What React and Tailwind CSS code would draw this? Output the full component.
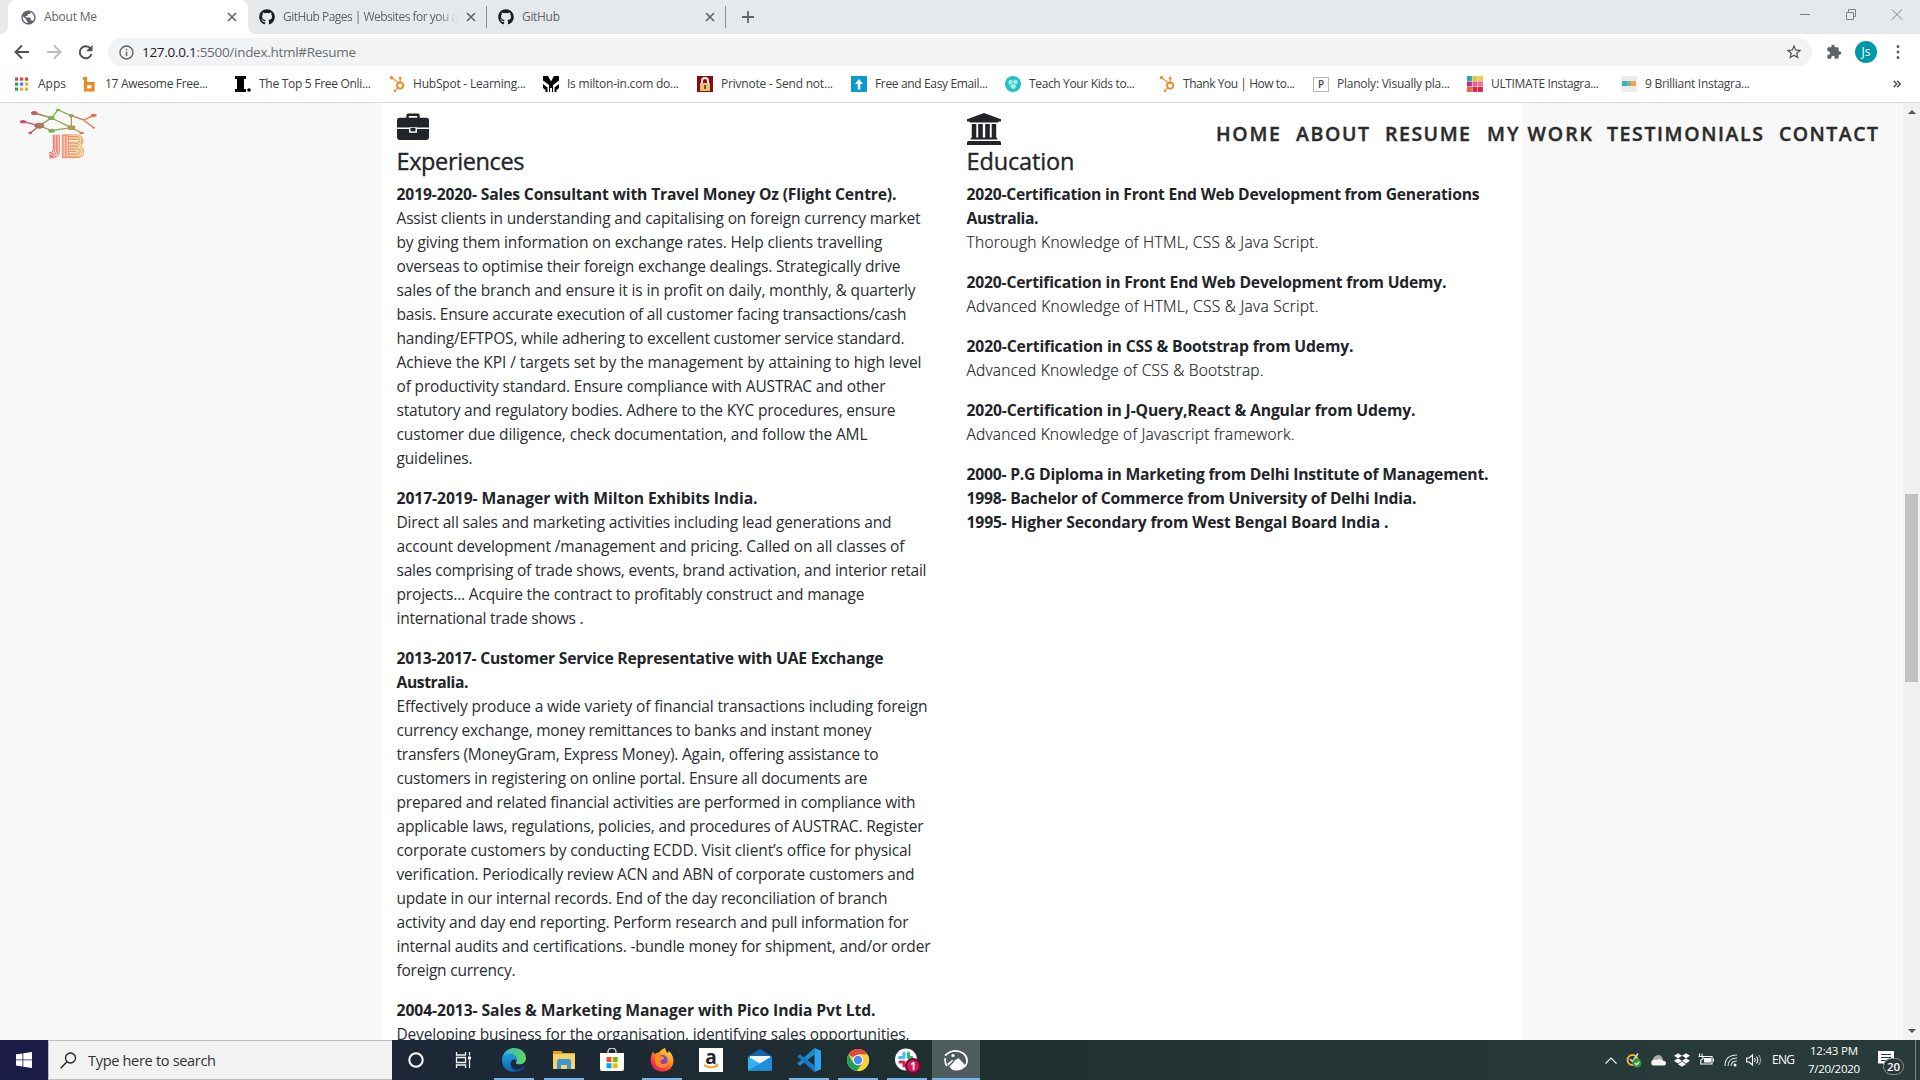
import React, { useLayoutEffect, useRef } from "react";
import { FaGithub, FaHubspot, FaDropbox } from "react-icons/fa";
import { MdExtension, MdStarBorder, MdPublic } from "react-icons/md";

/* One line of text whose tracking is adjusted so that it fills the given width. */
function Fit({ w, className = "", children }) {
  const ref = useRef(null);
  useLayoutEffect(() => {
    const el = ref.current;
    el.style.letterSpacing = "0px";
    const n = el.textContent.length - 1;
    const natural = el.getBoundingClientRect().width;
    el.style.letterSpacing = (w - natural) / n + "px";
  }, [w]);
  return (
    <span className={"block whitespace-nowrap " + className} style={{ width: w }}>
      <span ref={ref} className="inline-block whitespace-pre">{children}</span>
    </span>
  );
}

const experiences = [
  [
    ["b", 500, "2019-2020- Sales Consultant with Travel Money Oz (Flight Centre)."],
    ["t", 524, "Assist clients in understanding and capitalising on foreign currency market"],
    ["t", 486, "by giving them information on exchange rates. Help clients travelling"],
    ["t", 504, "overseas to optimise their foreign exchange dealings. Strategically drive"],
    ["t", 519, "sales of the branch and ensure it is in profit on daily, monthly, & quarterly"],
    ["t", 510, "basis. Ensure accurate execution of all customer facing transactions/cash"],
    ["t", 508, "handing/EFTPOS, while adhering to excellent customer service standard."],
    ["t", 525, "Achieve the KPI / targets set by the management by attaining to high level"],
    ["t", 489, "of productivity standard. Ensure compliance with AUSTRAC and other"],
    ["t", 499, "statutory and regulatory bodies. Adhere to the KYC procedures, ensure"],
    ["t", 471, "customer due diligence, check documentation, and follow the AML"],
    ["t", 76, "guidelines."],
  ],
  [
    ["b", 361, "2017-2019- Manager with Milton Exhibits India."],
    ["t", 495, "Direct all sales and marketing activities including lead generations and"],
    ["t", 508, "account development /management and pricing. Called on all classes of"],
    ["t", 530, "sales comprising of trade shows, events, brand activation, and interior retail"],
    ["t", 468, "projects... Acquire the contract to profitably construct and manage"],
    ["t", 187, "international trade shows ."],
  ],
  [
    ["b", 487, "2013-2017- Customer Service Representative with UAE Exchange"],
    ["b", 72, "Australia."],
    ["t", 531, "Effectively produce a wide variety of financial transactions including foreign"],
    ["t", 475, "currency exchange, money remittances to banks and instant money"],
    ["t", 482, "transfers (MoneyGram, Express Money). Again, offering assistance to"],
    ["t", 471, "customers in registering on online portal. Ensure all documents are"],
    ["t", 519, "prepared and related financial activities are performed in compliance with"],
    ["t", 527, "applicable laws, regulations, policies, and procedures of AUSTRAC. Register"],
    ["t", 515, "corporate customers by conducting ECDD. Visit client’s office for physical"],
    ["t", 518, "verification. Periodically review ACN and ABN of corporate customers and"],
    ["t", 491, "update in our internal records. End of the day reconciliation of branch"],
    ["t", 512, "activity and day end reporting. Perform research and pull information for"],
    ["t", 534, "internal audits and certifications. -bundle money for shipment, and/or order"],
    ["t", 119, "foreign currency."],
  ],
  [
    ["b", 479, "2004-2013- Sales & Marketing Manager with Pico India Pvt Ltd."],
    ["t", 513, "Developing business for the organisation, identifying sales opportunities,"],
  ],
];

const education = [
  [
    ["b", 513, "2020-Certification in Front End Web Development from Generations"],
    ["b", 72, "Australia."],
    ["l", 352, "Thorough Knowledge of HTML, CSS & Java Script."],
  ],
  [
    ["b", 480, "2020-Certification in Front End Web Development from Udemy."],
    ["l", 352, "Advanced Knowledge of HTML, CSS & Java Script."],
  ],
  [
    ["b", 387, "2020-Certification in CSS & Bootstrap from Udemy."],
    ["l", 297, "Advanced Knowledge of CSS & Bootstrap."],
  ],
  [
    ["b", 449, "2020-Certification in J-Query,React & Angular from Udemy."],
    ["l", 328, "Advanced Knowledge of Javascript framework."],
  ],
  [
    ["b", 522, "2000- P.G Diploma in Marketing from Delhi Institute of Management."],
    ["b", 450, "1998- Bachelor of Commerce from University of Delhi India."],
    ["b", 422, "1995- Higher Secondary from West Bengal Board India ."],
  ],
];

const lineStyles = {
  b: "text-[15.7px] font-bold",
  t: "text-[15.5px] text-[#2a2e33]",
  l: "text-[15.5px] font-light [-webkit-text-stroke:0.2px_#212529]",
};

function Block({ lines }) {
  return (
    <div className="mb-4">
      {lines.map(([kind, w, text]) => (
        <Fit key={text} w={w} className={"h-6 leading-[23px] " + lineStyles[kind]}>{text}</Fit>
      ))}
    </div>
  );
}

function Close({ className = "" }) {
  return (
    <svg className={"size-[10px] shrink-0 " + className} viewBox="0 0 10 10" stroke="#5f6368" strokeWidth="1.6">
      <path d="M1 1l8 8M9 1l-8 8" />
    </svg>
  );
}

function TabStrip() {
  return (
    <div className="flex h-[34px] bg-[#e6e9ec] text-[12px] text-[#5f6368]">
      <div className="w-2 bg-white">
        <div className="size-full rounded-br-lg bg-[#e6e9ec]" />
      </div>
      <div className="flex w-60 items-center rounded-t-lg bg-white pr-[11px] pl-3">
        <MdPublic className="size-[17px]" />
        <Fit w={53} className="ml-[7px]">About Me</Fit>
        <Close className="ml-auto" />
      </div>
      <div className="w-2 bg-white">
        <div className="size-full rounded-bl-lg bg-[#e6e9ec]" />
      </div>
      <div className="flex w-[231px] items-center border-r border-[#8b8f94] bg-clip-padding pl-[3px] pr-[10px] [border-image:linear-gradient(to_bottom,transparent_20%,#8b8f94_20%,#8b8f94_80%,transparent_80%)_1]">
        <FaGithub className="size-4 text-[#1b1f23]" />
        <div className="ml-2 w-[180px] [mask-image:linear-gradient(to_right,#000_155px,transparent_175px)]">
          <Fit w={175}>GitHub Pages | Websites for you a</Fit>
        </div>
        <Close className="ml-auto" />
      </div>
      <div className="flex w-[239px] items-center border-r border-[#8b8f94] pl-[11px] pr-[10px] [border-image:linear-gradient(to_bottom,transparent_20%,#8b8f94_20%,#8b8f94_80%,transparent_80%)_1]">
        <FaGithub className="size-4 text-[#1b1f23]" />
        <Fit w={38} className="ml-2">GitHub</Fit>
        <Close className="ml-auto" />
      </div>
      <svg className="mt-[11px] ml-[16px] size-3" viewBox="0 0 12 12" stroke="#5f6368" strokeWidth="1.8">
        <path d="M6 0v12M0 6h12" />
      </svg>
      <svg className="mt-[9px] ml-auto h-[11px] w-[103px]" viewBox="0 0 103 11" fill="none" stroke="#7d8083">
        <path d="M0 5.500h10M46.500 3.500h7v7h-7zM48.500 3v-2.500h7v7h-2M92 .5l10 10M102 .5l-10 10" />
      </svg>
      <div className="w-[17px]" />
    </div>
  );
}

function AddressBar() {
  return (
    <div className="flex h-9 items-center bg-white pl-[14px]">
      <svg className="h-4 w-20" viewBox="0 0 80 16" fill="none" strokeWidth="1.9">
        <path d="M15 8H2M8 1.500L1.500 8 8 14.500" stroke="#4e5256" />
        <path d="M33 8h13M40 1.500L46.500 8 40 14.500" stroke="#b9bcbf" />
        <path d="M76.500 4.500A6 6 0 1 0 77.500 10" stroke="#4e5256" />
        <path d="M78.500 .8v6.400h-6.400z" fill="#4e5256" />
      </svg>
      <div className="ml-[14px] flex h-7 w-[1704px] items-center rounded-full bg-[#f1f3f4] pl-[11px] pr-[9px]">
        <svg className="size-[15px]" viewBox="0 0 15 15" fill="none" stroke="#5f6368" strokeWidth="1.4">
          <circle cx="7.500" cy="7.500" r="6.500" />
          <path d="M7.500 6.500v4.500M7.500 3.700v1.500" />
        </svg>
        <Fit w={214} className="ml-[8px] text-[13.5px] text-[#6a6e72]">
          <span className="text-[#202124]">127.0.0.1</span>:5500/index.html#Resume
        </Fit>
        <MdStarBorder className="ml-auto size-[18px] text-[#4e5256]" />
      </div>
      <MdExtension className="ml-[14px] size-4 text-[#5f6368]" />
      <div className="ml-[13px] grid size-[22px] place-items-center rounded-full bg-[#0097a7] text-[12px] text-white">Js</div>
      <svg className="ml-[19px] h-4 w-1" viewBox="0 0 4 16" fill="#5f6368">
        <circle cx="2" cy="2.500" r="1.500" /><circle cx="2" cy="8" r="1.500" /><circle cx="2" cy="13.500" r="1.500" />
      </svg>
    </div>
  );
}

const cells = (colors, size, step) =>
  colors.map((c, i) => <rect key={i} x={(i % 3) * step} y={Math.floor(i / 3) * step} width={size} height={size} fill={c} />);

const favicons = {
  apps: <svg viewBox="0 0 16 16" className="size-4"><g transform="translate(1 1.500)">{cells(["#d9453a", "#d9453a", "#d9453a", "#2f9e58", "#3f7fe8", "#e9ae2c", "#2f9e58", "#e9ae2c", "#e9ae2c"], 3.2, 5)}</g></svg>,
  b: <svg viewBox="0 0 16 16" className="size-4" fill="none" stroke="#e98a1c" strokeWidth="3.200"><path d="M2 2.500h2.500v11.500M4.500 7.500h7.500v6.500H3" /></svg>,
  i: <svg viewBox="0 0 16 16" className="size-4"><path d="M0 0h11v3H9v10h2v3H0v-3h2V3H0z" /><circle cx="14" cy="14" r="1.800" /></svg>,
  hub: <FaHubspot className="size-4 text-[#f08a24]" />,
  milton: <svg viewBox="0 0 16 16" className="size-4"><path d="M0 0h16v16H0z" /><path d="M5 0h6L8 5.500zM0 4.500l6 4.500v7H4.500v-4.500L0 8zM16 4.500L10 9v7h1.500v-4.500L16 8zM7 12h2v4H7zM0 12l2.500 2v2H0zM16 12l-2.500 2v2H16z" fill="#fff" /></svg>,
  priv: <svg viewBox="0 0 16 16" className="size-4"><path d="M0 0h16v16H0z" fill="#8a0c12" /><path d="M5 8V5a3 3 0 0 1 6 0v3" fill="none" stroke="#eee" strokeWidth="2" /><path d="M3 7h10v8H3z" fill="#e9c274" /><path d="M7.300 9h1.500v4H7.300z" fill="#333" /></svg>,
  up: <svg viewBox="0 0 16 16" className="size-4"><path d="M0 0h16v16H0z" fill="#0a9bcd" /><path d="M8 3l4 5H9.300v5.500H6.700V8H4z" fill="#fff" /></svg>,
  teach: <svg viewBox="0 0 16 16" className="size-4"><circle cx="8" cy="8" r="8" fill="#22c0c4" /><g fill="#a9eaeb" stroke="#22c0c4" strokeWidth=".7"><circle cx="6" cy="6.500" r="3" /><circle cx="10.500" cy="6" r="2.700" /><circle cx="8.300" cy="10.300" r="3" /></g></svg>,
  planoly: <span className="grid h-[15px] w-4 place-items-center border border-[#b5b5b5] text-[10px] leading-none font-semibold text-[#444]">P</span>,
  grid: <svg viewBox="0 0 16 16" className="size-4"><path d="M0 0h16v16H0z" fill="#f6e3d5" />{cells(["#1fa7b5", "#c8cf3f", "#eecb3f", "#b93090", "#ef5a9c", "#f06ba0", "#e8663a", "#d9234c", "#d9234c"], 4.9, 5.5)}</svg>,
  nine: <svg viewBox="0 0 16 16" className="size-4"><path d="M0 0h16v16H0z" fill="#ececec" /><path d="M1 5h5v5H1z" fill="#35b5ad" /><path d="M6 5h4v5H6z" fill="#8fa9a0" /><path d="M10 5h5v5h-5z" fill="#f3a256" /></svg>,
};

const bookmarks = [
  ["apps", "w-[67px]", 28, "Apps"],
  ["b", "w-[154px]", 103, "17 Awesome Free..."],
  ["i", "w-[154px]", 112, "The Top 5 Free Onli..."],
  ["hub", "w-[154px]", 113, "HubSpot - Learning..."],
  ["milton", "w-[154px]", 112, "Is milton-in.com do..."],
  ["priv", "w-[154px]", 112, "Privnote - Send not..."],
  ["up", "w-[154px]", 113, "Free and Easy Email..."],
  ["teach", "w-[154px]", 106, "Teach Your Kids to..."],
  ["hub", "w-[154px]", 112, "Thank You | How to..."],
  ["planoly", "w-[154px]", 113, "Planoly: Visually pla..."],
  ["grid", "w-[154px]", 108, "ULTIMATE Instagra..."],
  ["nine", "w-[154px]", 105, "9 Brilliant Instagra..."],
];

function Bookmarks() {
  return (
    <div className="flex h-[33px] items-start border-b border-[#d7d9db] bg-white pl-[14px] text-[12px] text-[#3c4043]">
      {bookmarks.map(([icon, slot, w, label]) => (
        <div key={label} className={"flex h-7 shrink-0 items-center gap-2 " + slot}>
          {favicons[icon]}
          <Fit w={w}>{label}</Fit>
        </div>
      ))}
      <svg className="mt-[10px] mr-[19px] ml-auto h-2 w-2" viewBox="0 0 8 8" fill="none" stroke="#4e5256" strokeWidth="1.500">
        <path d="M.7.700L3.700 4l-3 3.300M4.200.700L7.200 4l-3 3.300" />
      </svg>
    </div>
  );
}

function Logo() {
  return (
    <svg className="h-[62px] w-[100px]" viewBox="0 0 300 186" fill="none">
      <defs>
        <linearGradient id="net" x1="39" x2="251" y1="0" y2="0" gradientUnits="userSpaceOnUse">
          <stop stopColor="#dc3f7d" /><stop offset=".22" stopColor="#b0705f" /><stop offset=".42" stopColor="#7fb553" />
          <stop offset=".68" stopColor="#a39e4f" /><stop offset="1" stopColor="#f2694f" />
        </linearGradient>
        <linearGradient id="jb" x1="118" x2="222" y1="0" y2="0" gradientUnits="userSpaceOnUse">
          <stop stopColor="#e0604f" /><stop offset=".4" stopColor="#f0876a" /><stop offset="1" stopColor="#eba23f" />
        </linearGradient>
      </defs>
      <g stroke="url(#net)" strokeWidth="4">
        <path d="M73 33l51 15 20-24 40 17v36l-60-29-36 23-49-12M61 93l27-22 37 15 59-9 31 16M184 41l37 13 30-14M221 54l30 23" />
      </g>
      <g fill="url(#net)">
        <ellipse cx="73" cy="33" rx="10" ry="6" /><ellipse cx="39" cy="59" rx="9" ry="5" /><ellipse cx="61" cy="93" rx="6" ry="4" />
        <ellipse cx="88" cy="71" rx="15" ry="9" /><ellipse cx="144" cy="24" rx="7" ry="4" /><ellipse cx="124" cy="48" rx="10" ry="6" />
        <ellipse cx="184" cy="41" rx="8" ry="5" /><ellipse cx="251" cy="40" rx="9" ry="5" /><ellipse cx="251" cy="77" rx="4" ry="3" />
        <ellipse cx="125" cy="86" rx="10" ry="6" /><ellipse cx="184" cy="77" rx="12" ry="7" /><ellipse cx="215" cy="93" rx="7" ry="4" />
      </g>
      <g stroke="url(#jb)" strokeWidth="3">
        <path d="M130 98v46q0 8-12 8M134.500 98v48q0 10-16.500 10M139 98v50q0 12-21 12M143.500 98v52q0 14-25.500 14M148 98v54q0 16-30 16" />
        <path d="M157 98v70M161.500 98v70M166 98v70M170.500 98v70M175 98v70" />
        <path d="M157 99h44q18 0 18 17 0 12-8 16 10 4 10 18 0 17-20 17h-44M175 103.500h26q14 0 14 13 0 13-14 13h-26M175 108h26q9 0 9 8.500t-9 8.500h-26M175 112.500h24q6 0 6 4t-6 4h-24M175 134h26q15 0 15 14.500t-15 14.500h-26M175 138.500h25q11 0 11 10t-11 10h-25M175 143h24q7 0 7 5.500t-7 5.500h-24M175 148.500h24" />
      </g>
    </svg>
  );
}

const nav = [
  ["HOME", 64, "mr-[16px]"],
  ["ABOUT", 73, "mr-[16px]"],
  ["RESUME", 85, "mr-[17px]"],
  ["MY WORK", 105, "mr-[15px]"],
  ["TESTIMONIALS", 156, "mr-[16px]"],
  ["CONTACT", 99, ""],
];

function Page() {
  return (
    <div className="flex h-[937px] overflow-hidden bg-[#f8f8f8] text-[#212529]">
      <div className="relative flex-1">
        <div className="mx-auto flex h-full w-[1140px] overflow-hidden bg-white">
          <section className="w-[570px] shrink-0 px-[15px] pt-[10px]">
            <svg className="h-[27px] w-8" viewBox="0 0 32 28" preserveAspectRatio="none">
              <path d="M9.300 6V2.500Q9.300 .5 11.300 .5h9.400q2 0 2 2V6h-2.500V3h-8.400v3z" fill="#212529" />
              <path d="M2.500 5h27q2.500 0 2.500 2.500V15H0V7.500Q0 5 2.500 5zM0 16.500h32V25.500q0 2.500-2.500 2.500h-27Q0 28 0 25.500z" fill="#212529" />
              <path d="M12 15h8v5.500h-8z" fill="#fff" /><path d="M13.500 15.500h5V19h-5z" fill="#212529" />
            </svg>
            <h2 className="mt-[6px] mb-2 h-[29px] text-[23.500px] leading-[31px] font-medium [-webkit-text-stroke:0.35px]"><Fit w={128}>Experiences</Fit></h2>
            {experiences.map((lines) => <Block key={lines[0][2]} lines={lines} />)}
          </section>
          <section className="w-[570px] shrink-0 px-[15px] pt-[10px]">
            <svg className="-mb-[5px] h-8 w-[34px]" viewBox="0 0 34 32" fill="#212529">
              <path d="M17 0l17 6.300v2.200h-2.300q0 1-1.200 1h-27q-1.200 0-1.200-1H0V6.300zM4.800 11h4.500v13.500h1.900V11h4.600v13.500h2.400V11h4.600v13.500h1.900V11h4.500v13.500q1.300.200 1.300 2h-27q0-1.800 1.300-2zM1.500 28h31q1.500 0 1.500 1.500V32H0v-2.500Q0 28 1.500 28z" />
            </svg>
            <h2 className="mt-[6px] mb-2 h-[29px] text-[23.500px] leading-[31px] font-medium [-webkit-text-stroke:0.35px]"><Fit w={108}>Education</Fit></h2>
            {education.map((lines) => <Block key={lines[0][2]} lines={lines} />)}
          </section>
        </div>
        {/* fixed header that floats over the scrolled content */}
        <header className="absolute inset-x-0 top-0 flex h-[62px] items-start justify-between pr-[25px] pl-[10px]">
          <div className="-mt-px"><Logo /></div>
          <nav className="mt-[17px] flex text-[19.500px] leading-[28px] font-semibold text-[#2b2b2b] [-webkit-text-stroke:0.4px]">
            {nav.map(([label, w, gap]) => <Fit key={label} w={w} className={gap}>{label}</Fit>)}
          </nav>
        </header>
      </div>
      <div className="flex w-[17px] flex-col items-center justify-between bg-[#f1f1f1]">
        <svg className="mt-[7px] h-1 w-2" viewBox="0 0 8 4" fill="#505050"><path d="M0 4l4-4 4 4z" /></svg>
        <div className="mt-[-1px] mb-[-33px] h-[188px] w-[13px] bg-[#c1c1c1]" />
        <svg className="mb-[7px] h-1 w-2" viewBox="0 0 8 4" fill="#505050"><path d="M0 0l4 4 4-4z" /></svg>
      </div>
    </div>
  );
}

function Cortana() {
  return <svg viewBox="0 0 24 24" className="size-6"><circle cx="12" cy="12" r="6.700" fill="none" stroke="#fff" strokeWidth="2" /></svg>;
}
function TaskView() {
  return (
    <svg viewBox="0 0 24 24" className="size-6" fill="none" stroke="#f2f4f4" strokeWidth="1.300">
      <path d="M4.500 4v3h9V4M4.500 20v-3h9v3M4.500 9.500h9v5h-9zM17.500 4v3.500M17.500 12v8" /><path d="M16 8.500h3v3h-3z" fill="#fff" stroke="none" />
    </svg>
  );
}
function Edge() {
  return (
    <svg viewBox="0 0 24 24" className="size-6">
      <defs>
        <linearGradient id="e1" x1="0" x2="1" y1="0" y2="0"><stop stopColor="#27b2e6" /><stop offset="1" stopColor="#63d957" /></linearGradient>
        <linearGradient id="e2" x1="0" x2="0" y1="0" y2="1"><stop stopColor="#1b9de2" /><stop offset="1" stopColor="#1260b4" /></linearGradient>
      </defs>
      <path d="M.2 11C.8 4.500 6 0 12.200 0 19 0 24 4.700 24 10c0 4-3 6.300-6.500 6.300-3 0-4.300-1.200-3.300-2.500C16 11 13 6 8 6 4 6 1 8.500.2 11z" fill="url(#e1)" />
      <path d="M0 12c0-4 3.500-6 7.500-6 4.500 0 7.500 3.500 7.300 6.300-4-2.300-7 .7-6 4.700.7 3 3 5.500 6 6.600C7 25.500 0 20 0 12z" fill="url(#e2)" />
      <path d="M9 13.500C8 18 12 21.500 16 21c2.700-.300 4.600-1.500 6-3 .600-.500 1.200 0 .800.600C21 21.800 18 23.600 14.800 23.800 9 22.500 7 17 9 13.500z" fill="#0d4a94" />
    </svg>
  );
}
function Folder() {
  return (
    <svg viewBox="0 0 24 24" className="size-6">
      <path d="M1 3h8l2 2h12v16H1z" fill="#e0a220" /><path d="M1 6h22v15H1z" fill="#fbd266" />
      <path d="M5 21v-8.500l1.500-1.500h11l1.500 1.500V21h-4v-4H9v4z" fill="#3f96d4" />
    </svg>
  );
}
function Store() {
  return (
    <svg viewBox="0 0 24 24" className="size-6">
      <path d="M8 6V4a4 4 0 0 1 8 0v2" fill="none" stroke="#ddd" strokeWidth="1.300" /><path d="M0 5h24v16q0 2-2 2H2q-2 0-2-2z" fill="#fff" />
      <path d="M6.500 9h5v5h-5z" fill="#ee5126" /><path d="M12.700 9h5v5h-5z" fill="#7fba00" /><path d="M6.500 15.200h5v5h-5z" fill="#00a4ef" /><path d="M12.700 15.200h5v5h-5z" fill="#ffb900" />
    </svg>
  );
}
function Firefox() {
  return (
    <svg viewBox="0 0 24 24" className="size-6">
      <defs><linearGradient id="ff" x1=".9" x2=".2" y1="0" y2="1"><stop stopColor="#ffe83f" /><stop offset=".4" stopColor="#ff9a1f" /><stop offset=".75" stopColor="#fb3b3f" /><stop offset="1" stopColor="#e01873" /></linearGradient></defs>
      <path d="M3 3.500L4.500 6Q6 4.500 9 4.500 11 1 15.500 0 15 3 18 5q1-1 .5-2.500Q23.500 7 23.500 13 23 23 12 23.500 1.500 23 .7 13 .7 7 3 3.500z" fill="url(#ff)" />
      <circle cx="12.500" cy="12" r="5" fill="#7a45d6" /><path d="M5 8q4-2 7 .500 3 0 2 2-1 1.500-3 1.500-1.500 3 2 4 4 0 6-3-1 7-7.500 7Q4 19 5 8z" fill="#ff8b1c" />
    </svg>
  );
}
function AmazonTile() {
  return (
    <svg viewBox="0 0 24 24" className="size-6">
      <path d="M0 0h24v24H0z" fill="#fff" />
      <text x="12" y="15.500" textAnchor="middle" fontSize="19" fontWeight="700" fill="#1d2733">a</text>
      <path d="M5 17q7 4.500 13.500.500" fill="none" stroke="#f79a1c" strokeWidth="1.500" /><path d="M15.800 16.300l3.200-.2-.8 3" fill="none" stroke="#f79a1c" />
    </svg>
  );
}
function Mail() {
  return (
    <svg viewBox="0 0 24 24" className="size-6">
      <path d="M0 8.500L12 1l12 7.500V11H0z" fill="#1466b0" /><path d="M2 8h20v8H2z" fill="#f4f6f8" /><path d="M0 8.500l12 7 12-7V22.500H0z" fill="#38b0f0" /><path d="M24 8.500L0 22.500h24z" fill="#1c8fe0" />
    </svg>
  );
}
function VSCode() {
  return (
    <svg viewBox="0 0 24 24" className="size-6">
      <path d="M17.500 0L24 2.800v18.400L17.500 24z" fill="#2aa4ee" /><path d="M17.500 0v6.500L3 17.700.3 15.500z" fill="#1f8ad2" /><path d="M17.500 24v-6.500L3 6.300.3 8.500z" fill="#1a76bd" />
    </svg>
  );
}
function Chrome() {
  return (
    <svg viewBox="0 0 24 24" className="size-6">
      <circle cx="12" cy="12" r="11" fill="#fdd03b" /><path d="M12 12L2.500 6.500A11 11 0 0 1 21.500 6.500H12z" fill="#dd4b3e" /><path d="M12 12l-4.800 2.800L2.500 6.500a11 11 0 0 0 8.300 16.400L16.800 14.800z" fill="#1fa15d" /><path d="M12 6.500h9.500A11 11 0 0 1 11 23l5.800-8.200z" fill="#fdd03b" />
      <circle cx="12" cy="12" r="5.200" fill="#fff" /><circle cx="12" cy="12" r="4.200" fill="#4a8af4" />
    </svg>
  );
}
function Slack() {
  return (
    <div className="relative size-6">
      <svg viewBox="0 0 24 24" className="size-6" strokeWidth="3" strokeLinecap="round">
        <circle cx="11" cy="11.500" r="11" fill="#fff" /><path d="M9 5v4M4.500 9.500H9" stroke="#36c5f0" /><path d="M13.500 5v4.500M13.500 9.500H17" stroke="#2eb67d" /><path d="M5 14h4M9 14v4" stroke="#e01e5a" /><path d="M13.500 14H17M13.500 14v4" stroke="#ecb22e" />
      </svg>
      <span className="absolute top-[10px] left-[10px] grid size-4 place-items-center rounded-full border-2 border-[#6a0d30] bg-[#d11c55] text-[10px] leading-none font-bold text-white">1</span>
    </div>
  );
}
function Photos() {
  return (
    <svg viewBox="0 0 24 24" className="size-6" fill="none" stroke="#fff" strokeWidth="1.700">
      <path d="M1.200 10Q.5 15 3 18M1 7.500Q10-.5 19.500 5.500 23.500 9 23 13.500 22.800 16 21 18.500" /><path d="M3 16l5-4 2 1 4.500-3L22 18q-4 4.500-10 4.500-2 0-4-1z" fill="#fff" stroke="none" /><path d="M3.500 19.500L10 13" stroke="#4d5d5e" strokeWidth="1.500" /><circle cx="9" cy="7.500" r="1.600" fill="#fff" stroke="none" />
    </svg>
  );
}

const apps = [
  [Cortana, "w-[48px]", ""],
  [TaskView, "w-[48px]", ""],
  [Edge, "w-[52px]", "w-10"],
  [Folder, "w-[47px]", "w-10"],
  [Store, "w-[50px]", ""],
  [Firefox, "w-[49px]", "w-10"],
  [AmazonTile, "w-[49px]", ""],
  [Mail, "w-[49px]", ""],
  [VSCode, "w-[49px]", "w-10"],
  [Chrome, "w-[49px]", "w-10"],
  [Slack, "w-[50px]", "w-10"],
  [Photos, "w-12 bg-[#4d5d5e]", "w-12"],
];

function Taskbar() {
  return (
    <div className="flex h-10 bg-linear-to-r from-[#1b2438] from-15% via-[#20302f] via-50% to-[#293c3b] text-white">
      <div className="grid w-12 place-items-center bg-[#1a1c47]">
        <svg viewBox="0 0 16 16" className="size-4" fill="#fff"><path d="M0 2.300l6.500-.9v6.100H0zM7.300 1.300L16 0v7.500H7.300zM0 8.300h6.500v6.200L0 13.600zM7.300 8.300H16V16l-8.700-1.300z" /></svg>
      </div>
      <div className="flex w-[344px] items-center border-y border-l border-[#bdbdbd] bg-[#f2f2f2] pl-[11px]">
        <svg viewBox="0 0 17 17" className="size-[17px]" fill="none" stroke="#222" strokeWidth="1.300"><circle cx="10.500" cy="6" r="5" /><path d="M7 9.700L.700 16.300" /></svg>
        <Fit w={128} className="mt-px ml-[11px] text-[14.500px] text-[#333]">Type here to search</Fit>
      </div>
      {apps.map(([Icon, slot, bar], i) => (
        <div key={i} className={"flex shrink-0 flex-col items-center " + slot}>
          <div className="mt-2 h-[30px]"><Icon /></div>
          <div className={"h-[2px] bg-[#76b4ea] " + bar} />
        </div>
      ))}
      <div className="ml-auto flex items-center">
        <svg viewBox="0 0 12 7" className="h-[7px] w-3" fill="none" stroke="#fff" strokeWidth="1.200"><path d="M.5 6.500L6 1l5.500 5.500" /></svg>
        <svg viewBox="0 0 16 16" className="ml-[9px] size-4"><circle cx="6.500" cy="8" r="5" fill="none" stroke="#f5b32c" strokeWidth="2" /><path d="M4 7l2.500 2.500L12 1.500" fill="none" stroke="#ddd" strokeWidth="1.500" /><circle cx="11" cy="11" r="4.500" fill="#2a9e3a" /><path d="M8.800 11l1.700 1.700 2.800-3" fill="none" stroke="#fff" strokeWidth="1.300" /></svg>
        <svg viewBox="0 0 16 12" className="ml-2 h-3 w-4"><path d="M2 9Q3 1.500 8 1q4 0 5 5v4H3z" fill="#a5acac" /><path d="M3 11.500a3 3 0 0 1 0-5.500q2-.800 4 0 2.500-2 5.500.500 3.500.200 3.500 2.700 0 2.300-3 2.300z" fill="#f3f5f5" /></svg>
        <FaDropbox className="ml-2 size-4" />
        <svg viewBox="0 0 16 14" className="ml-2 h-[14px] w-4" fill="none" stroke="#fff" strokeWidth="1.100"><path d="M5 3.500h9v7.500H4.500M15.500 5.500v3.500M1.500 .5v3M4 .5v3M.5 3.500h4.500v2q0 1.200-2.200 1.500M2.800 7v4h2" /><path d="M6.500 5.500h6v3.500h-6z" fill="#fff" /></svg>
        <svg viewBox="0 0 14 14" className="ml-[10px] size-[14px]" fill="none" stroke="#dfe3e3" strokeWidth="1.100"><path d="M1 13Q1 2 13 2M4 13Q4.500 5 13 5M7 13Q7.500 8 13 8" /><circle cx="11" cy="12" r="1.500" fill="#fff" stroke="none" /></svg>
        <svg viewBox="0 0 16 14" className="ml-2 h-[14px] w-4" fill="none" stroke="#fff" strokeWidth="1.100"><path d="M.6 5h2.600L6.500 2v10L3.200 9H.6zM8.500 5q1.500 2 0 4M10.500 3.500q2.500 3.500 0 7" /><path d="M12.800 2q3.500 5 0 10" stroke="#a0a8a8" /></svg>
        <Fit w={23} className="ml-[10px] text-[12px]">ENG</Fit>
        <div className="ml-[11px] flex w-[56px] flex-col items-center text-[11.500px] leading-[18px]">
          <Fit w={48}>12:43 PM</Fit>
          <Fit w={52}>7/20/2020</Fit>
        </div>
        <div className="relative ml-4 h-[30px] w-7">
          <svg viewBox="0 0 16 16" className="mt-[6px] size-4"><path d="M0 0h16v12.500H9V16l-4-3.500H0z" fill="#fff" /><path d="M3 3.500h10M3 6.500h10M3 9.500h6" stroke="#293c3b" /></svg>
          <span className="absolute top-[13px] left-[5px] grid h-[17px] w-[21px] place-items-center rounded-full border border-[#8b9494] bg-[#2c3738] text-[11.500px] leading-none font-semibold">20</span>
        </div>
        <div className="ml-[9px] h-10 w-[5px] border-l border-[#7c8786]" />
      </div>
    </div>
  );
}

export default function App() {
  return (
    <div className="flex h-[1080px] w-[1920px] flex-col overflow-hidden bg-white font-['Open_Sans','Noto_Sans',sans-serif]">
      <TabStrip />
      <AddressBar />
      <Bookmarks />
      <Page />
      <Taskbar />
    </div>
  );
}
